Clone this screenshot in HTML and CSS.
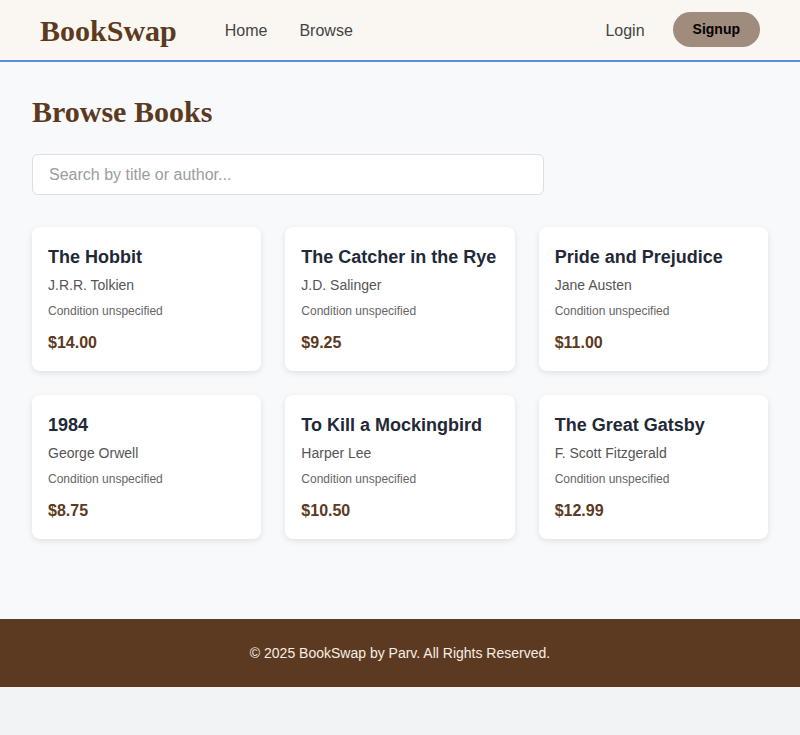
FILE: index.html
```html
<!DOCTYPE html>
<html lang="en">
<head>
<meta charset="utf-8">
<title>BookSwap - Browse Books</title>
<link rel="stylesheet" href="styles.css">
</head>
<body>
<header class="site-header">
  <div class="brand">BookSwap</div>
  <nav class="main-nav">
    <a href="#" class="nav-link">Home</a>
    <a href="#" class="nav-link">Browse</a>
  </nav>
  <div class="auth">
    <a href="#" class="nav-link">Login</a>
    <a href="#" class="btn-signup">Signup</a>
  </div>
</header>
<main class="content">
  <h1 class="page-title">Browse Books</h1>
  <input class="search" type="text" placeholder="Search by title or author...">
  <section class="grid">
    <article class="card">
      <h3 class="card-title">The Hobbit</h3>
      <p class="card-author">J.R.R. Tolkien</p>
      <p class="card-cond">Condition unspecified</p>
      <p class="card-price">$14.00</p>
    </article>
    <article class="card">
      <h3 class="card-title">The Catcher in the Rye</h3>
      <p class="card-author">J.D. Salinger</p>
      <p class="card-cond">Condition unspecified</p>
      <p class="card-price">$9.25</p>
    </article>
    <article class="card">
      <h3 class="card-title">Pride and Prejudice</h3>
      <p class="card-author">Jane Austen</p>
      <p class="card-cond">Condition unspecified</p>
      <p class="card-price">$11.00</p>
    </article>
    <article class="card">
      <h3 class="card-title">1984</h3>
      <p class="card-author">George Orwell</p>
      <p class="card-cond">Condition unspecified</p>
      <p class="card-price">$8.75</p>
    </article>
    <article class="card">
      <h3 class="card-title">To Kill a Mockingbird</h3>
      <p class="card-author">Harper Lee</p>
      <p class="card-cond">Condition unspecified</p>
      <p class="card-price">$10.50</p>
    </article>
    <article class="card">
      <h3 class="card-title">The Great Gatsby</h3>
      <p class="card-author">F. Scott Fitzgerald</p>
      <p class="card-cond">Condition unspecified</p>
      <p class="card-price">$12.99</p>
    </article>
  </section>
</main>
<footer class="site-footer">© 2025 BookSwap by Parv. All Rights Reserved.</footer>
</body>
</html>
```
FILE: styles.css
```css
* { box-sizing: border-box; }
html, body { margin: 0; padding: 0; }
body {
  background: #f2f3f5;
  font-family: "Liberation Sans", Arial, sans-serif;
  color: #1f2937;
}
.site-header {
  height: 62px;
  background: #faf7f2;
  border-bottom: 2px solid #5b8ede;
  display: flex;
  align-items: center;
  padding: 0 40px;
}
.brand {
  font-family: "Liberation Serif", "Times New Roman", serif;
  font-weight: bold;
  font-size: 30px;
  color: #5c3a1e;
  line-height: 36px;
  margin-top: 2px;
}
.main-nav {
  display: flex;
  gap: 32px;
  margin-left: 48px;
  flex: 1;
  margin-top: 2px;
}
.nav-link {
  font-size: 16px;
  color: #444;
  text-decoration: none;
  line-height: 20px;
}
.auth {
  display: flex;
  align-items: center;
  gap: 28px;
}
.auth .nav-link { margin-top: 2px; }
.btn-signup {
  display: inline-block;
  background: #a08c7d;
  color: #000;
  font-weight: bold;
  font-size: 14px;
  line-height: 35px;
  height: 35px;
  padding: 0 20px;
  border-radius: 18px;
  text-decoration: none;
  margin-bottom: 1px;
}
.content {
  background: #f8f9fb;
  padding: 32px 32px 80px;
}
.page-title {
  margin: 0 0 24px;
  font-family: "Liberation Serif", "Times New Roman", serif;
  font-size: 30px;
  line-height: 36px;
  color: #5c3a1e;
}
.search {
  display: block;
  width: 512px;
  height: 41px;
  padding: 0 16px;
  font-family: "Liberation Sans", Arial, sans-serif;
  font-size: 16px;
  border: 1px solid #dcdfe4;
  border-radius: 6px;
  background: #fff;
  color: #333;
  margin: 0 0 32px;
  outline: none;
}
.search::placeholder { color: #9a9ca2; }
.grid {
  display: grid;
  grid-template-columns: repeat(3, 1fr);
  gap: 24px;
}
.card {
  background: #fff;
  border-radius: 8px;
  box-shadow: 0 2px 6px rgba(0, 0, 0, 0.1);
  padding: 19px 16px 18px;
}
.card p, .card h3 { margin: 0; }
.card-title {
  font-size: 18px;
  line-height: 22px;
  font-weight: bold;
  color: #1f2937;
  margin-bottom: 8px !important;
  white-space: nowrap;
}
.card-author {
  font-size: 14px;
  line-height: 18px;
  color: #555;
  margin-bottom: 9px !important;
}
.card-cond {
  font-size: 12px;
  line-height: 16px;
  color: #666;
  margin-bottom: 14px !important;
}
.card-price {
  font-size: 16px;
  line-height: 20px;
  font-weight: bold;
  color: #5c3a1e;
}
.site-footer {
  background: #5c3a21;
  color: #f7efe4;
  text-align: center;
  font-size: 14px;
  line-height: 20px;
  padding: 24px 0;
}
```
